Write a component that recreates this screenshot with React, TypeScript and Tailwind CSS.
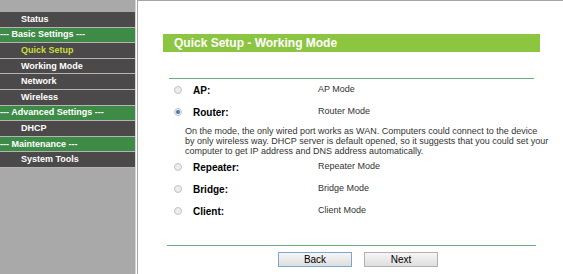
const MENU = [
  { label: "Status", kind: "item" },
  { label: "--- Basic Settings ---", kind: "group" },
  { label: "Quick Setup", kind: "active" },
  { label: "Working Mode", kind: "item" },
  { label: "Network", kind: "item" },
  { label: "Wireless", kind: "item" },
  { label: "--- Advanced Settings ---", kind: "group" },
  { label: "DHCP", kind: "item" },
  { label: "--- Maintenance ---", kind: "group" },
  { label: "System Tools", kind: "item" },
];

const MODES = [
  { id: "ap", label: "AP:", text: "AP Mode" },
  { id: "router", label: "Router:", text: "Router Mode" },
  { id: "repeater", label: "Repeater:", text: "Repeater Mode" },
  { id: "bridge", label: "Bridge:", text: "Bridge Mode" },
  { id: "client", label: "Client:", text: "Client Mode" },
];

function Radio({ checked }: { checked: boolean }) {
  return (
    <span className="flex h-[8px] w-[8px] items-center justify-center rounded-full border border-[#c4c4c4] bg-[#ececec]">
      {checked && <span className="h-[4px] w-[4px] rounded-full bg-[#3f7cb8]" />}
    </span>
  );
}

function ModeRow({ label, text, checked }: { label: string; text: string; checked: boolean }) {
  return (
    <div className="flex h-[22px] items-center">
      <div className="flex w-[19px] justify-start pl-[5px]">
        <Radio checked={checked} />
      </div>
      <div className="w-[130px] pl-[5px] text-[10px] font-bold text-black">{label}</div>
      <div className="text-[9px] text-[#333]">{text}</div>
    </div>
  );
}

export default function App() {
  return (
    <div
      className="flex h-[274px] w-[563px] overflow-hidden bg-white"
      style={{ fontFamily: '"Liberation Sans", Arial, sans-serif' }}
    >
      <nav className="flex w-[135px] shrink-0 flex-col bg-[#a9a9a9]">
        <div className="h-[12px] shrink-0" />
        {MENU.map((m) => (
          <div
            key={m.label}
            className={`flex h-[15.6px] shrink-0 items-center border-b border-[#b4b4b4] text-[9px] font-bold leading-none whitespace-nowrap ${
              m.kind === "group"
                ? "bg-[#3e8b47] pl-0 text-white"
                : m.kind === "active"
                ? "bg-[#4b494a] pl-[21px] text-[#c9dd3c]"
                : "bg-[#4b494a] pl-[21px] text-white"
            }`}
          >
            {m.label}
          </div>
        ))}
      </nav>
      <div className="w-px shrink-0 bg-[#d6d6d6]" />
      <div className="w-px shrink-0 bg-white" />
      <main className="flex-1 border-l border-t border-[#a6a6a6] bg-white">
        <div className="ml-[25px] mt-[33px] flex h-[18px] w-[377px] items-center bg-[#8cc540] pl-[11px] text-[12px] font-bold text-white">
          Quick Setup - Working Mode
        </div>

        <div className="ml-[31px] mt-[26px] w-[365px]">
          <div className="h-px bg-[#6aae80]" />
          <div>
            <ModeRow label="AP:" text="AP Mode" checked={false} />
            <ModeRow label="Router:" text="Router Mode" checked />
            <p className="mt-[3px] pl-[16px] text-[9px] leading-[10px] whitespace-nowrap text-[#333]">
              On the mode, the only wired port works as WAN. Computers could connect to the device
              <br />
              by only wireless way. DHCP server is default opened, so it suggests that you could set your
              <br />
              computer to get IP address and DNS address automatically.
            </p>
            {MODES.slice(2).map((m) => (
              <ModeRow key={m.id} label={m.label} text={m.text} checked={false} />
            ))}
          </div>
        </div>

        <div className="ml-[29px] mt-[23px] h-px w-[369px] bg-[#6aae80]" />
        <div className="mt-[6px] flex gap-[12px] pl-[140px]">
          <button
            type="button"
            className="flex h-[15px] w-[74px] items-center justify-center border border-[#7ea6d4] bg-gradient-to-b from-[#f6f6f6] to-[#dedede] text-[10px] text-black"
          >
            Back
          </button>
          <button
            type="button"
            className="flex h-[15px] w-[74px] items-center justify-center border border-[#b0b0b0] bg-gradient-to-b from-[#f6f6f6] to-[#dedede] text-[10px] text-black"
          >
            Next
          </button>
        </div>
      </main>
    </div>
  );
}
